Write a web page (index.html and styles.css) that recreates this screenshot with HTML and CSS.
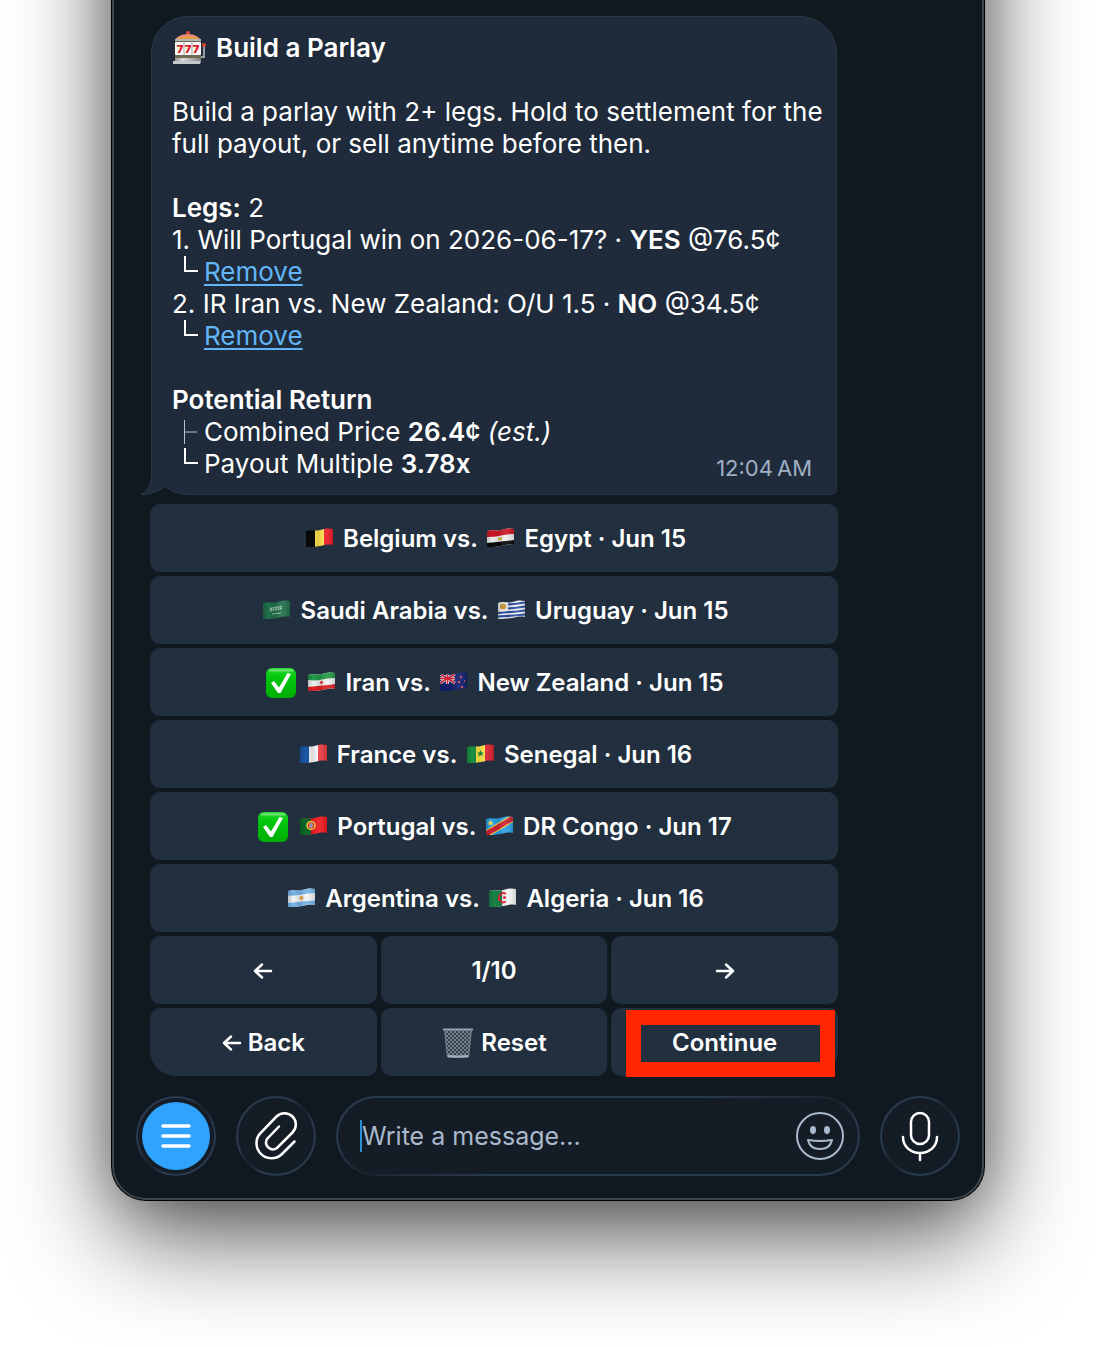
FILE: index.html
```html
<!DOCTYPE html>
<html lang="en">
<head>
    <meta charset="UTF-8">
    <meta name="viewport" content="width=device-width, initial-scale=1.0">
    <title>Build a Parlay</title>
    <link rel="stylesheet" href="styles.css">
</head>
<body>
    <!-- Shared shapes for the flags and icons -->
    <svg class="defs" width="0" height="0" aria-hidden="true">
        <defs>
            <clipPath id="wave">
                <path d="M0 3C5 1 9 3.500 14 2S22 0 27 1V17C22 16 19 17 14 18S5 19 0 19Z"/>
            </clipPath>
            <linearGradient id="fold">
                <stop offset="0" stop-color="#000" stop-opacity=".2"/>
                <stop offset=".2" stop-color="#000" stop-opacity="0"/>
                <stop offset=".45" stop-color="#000" stop-opacity=".12"/>
                <stop offset=".7" stop-color="#fff" stop-opacity=".08"/>
                <stop offset="1" stop-color="#000" stop-opacity=".15"/>
            </linearGradient>
            <linearGradient id="green" x2="0" y2="1">
                <stop offset="0" stop-color="#2bdc35"/>
                <stop offset=".3" stop-color="#00c70c"/>
                <stop offset="1" stop-color="#00ad05"/>
            </linearGradient>
            <linearGradient id="metal">
                <stop offset="0" stop-color="#8b8f92"/>
                <stop offset=".3" stop-color="#d9dcdf"/>
                <stop offset="1" stop-color="#7d8285"/>
            </linearGradient>
            <pattern id="mesh" width="4" height="4" patternUnits="userSpaceOnUse">
                <path d="M0 0L4 4M4 0L0 4" stroke="#71808d" stroke-width="1"/>
            </pattern>
            <symbol id="check" viewBox="0 0 30 30">
                <rect width="30" height="30" rx="6" fill="url(#green)"/>
                <path d="M4 2.500H26" stroke="#8df08f" stroke-width="2" stroke-linecap="round" opacity=".7"/>
                <path d="M5 15L8 13L13 19.500L21.500 5L25 6L14.500 25H12Z" fill="#fff"/>
            </symbol>
            <symbol id="arrow-left" viewBox="0 0 20 20">
                <path d="M18 10H2M9 3.500L2 10L9 16.500" fill="none" stroke="#fff" stroke-width="2.500" stroke-linecap="round" stroke-linejoin="round"/>
            </symbol>
            <symbol id="arrow-right" viewBox="0 0 20 20">
                <path d="M2 10H18M11 3.500L18 10L11 16.500" fill="none" stroke="#fff" stroke-width="2.500" stroke-linecap="round" stroke-linejoin="round"/>
            </symbol>
            <symbol id="corner" viewBox="0 0 32 32">
                <path d="M13 0V15H26" fill="none" stroke="#fff" stroke-width="2"/>
            </symbol>
            <symbol id="tee" viewBox="0 0 32 32">
                <path d="M12.500 4V28M12.500 16H25" fill="none" stroke="#b9bfc6" stroke-width="1"/>
            </symbol>
        </defs>
    </svg>

    <main class="window">
        <section class="chat">
            <article class="bubble">
                <h1 class="line title">
                    <svg class="slot" viewBox="0 0 34 34" aria-hidden="true">
                        <circle cx="16" cy="2" r="2" fill="#e0483a"/>
                        <path d="M3 9C4 6 10 3 16 3S27 6 29 9Z" fill="#e78e7c"/>
                        <path d="M6 7C11 5 21 5 26 7L28 9H4Z" fill="#ed9a3a"/>
                        <path d="M29 26H32V15" fill="none" stroke="#9a9fa3" stroke-width="2"/>
                        <circle cx="32" cy="14" r="2" fill="#e2402f"/>
                        <rect x="3" y="8" width="26" height="21" rx="2" fill="#6f6b52"/>
                        <rect x="3" y="8" width="26" height="2" fill="#b3b6b7"/>
                        <rect x="3" y="11" width="26" height="13" rx="1" fill="#f7f7f7"/>
                        <path d="M12 11V24M20 11V24" stroke="#a9a9a9" stroke-width="1"/>
                        <text class="sevens" x="8" y="22">7</text>
                        <text class="sevens" x="16" y="22">7</text>
                        <text class="sevens" x="24" y="22">7</text>
                        <path d="M3 27H29V30H3Z" fill="url(#metal)"/>
                        <path d="M1 30H29L28 33H1Z" fill="#c5c8ca"/>
                    </svg>
                    Build a Parlay
                </h1>
                <p class="text">Build a parlay with 2+ legs. Hold to settlement for the full payout, or sell anytime before then.</p>
                <div class="block">
                    <p class="line"><b>Legs:</b> 2</p>
                    <p class="line">1. Will Portugal win on 2026-06-17? · <b>YES</b> @76.5¢</p>
                    <p class="line"><svg class="tree" aria-hidden="true"><use href="#corner"/></svg><a href="#">Remove</a></p>
                    <p class="line">2. IR Iran vs. New Zealand: O/U 1.5 · <b>NO</b> @34.5¢</p>
                    <p class="line"><svg class="tree" aria-hidden="true"><use href="#corner"/></svg><a href="#">Remove</a></p>
                </div>
                <div class="block">
                    <h2 class="line">Potential Return</h2>
                    <p class="line"><svg class="tree" aria-hidden="true"><use href="#tee"/></svg>Combined Price <b>26.4¢</b> <i>(est.)</i></p>
                    <div class="last">
                        <p class="line"><svg class="tree" aria-hidden="true"><use href="#corner"/></svg>Payout Multiple <b>3.78x</b></p>
                        <time>12:04&#8239;AM</time>
                    </div>
                </div>
                <svg class="tail" viewBox="0 0 40 40" aria-hidden="true">
                    <path d="M11 2V22Q11 34 1 39.500Q16 39 25 31.500L34 30V2Z" fill="#1f2b3a"/>
                    <path d="M11.500 2V22Q11 34 1 39.500Q16 39 25 31.500" fill="none" stroke="#2a394a" stroke-width="1"/>
                </svg>
            </article>

            <div class="keyboard">
                <button class="key wide">
                    <svg class="flag" viewBox="0 0 27 19" aria-hidden="true"><g clip-path="url(#wave)">
                        <path d="M0 0H9V19H0Z" fill="#0a0a0a"/><path d="M9 0H18V19H9Z" fill="#ffe34a"/><path d="M18 0H27V19H18Z" fill="#ee1c28"/>
                        <path d="M0 0H27V19H0Z" fill="url(#fold)"/></g></svg>
                    Belgium vs.
                    <svg class="flag" viewBox="0 0 27 19" aria-hidden="true"><g clip-path="url(#wave)">
                        <path d="M0 0H27V19H0Z" fill="#eee"/><path d="M0 0H27V6Q20 6 14 7.500T0 9Z" fill="#ce1826"/><path d="M0 15Q8 14 14 13.500T27 12V19H0Z" fill="#0a0a0a"/>
                        <path d="M11 9L13 10L15 9V12H11Z" fill="#d8b42c"/>
                        <path d="M0 0H27V19H0Z" fill="url(#fold)"/></g></svg>
                    Egypt · Jun 15
                </button>
                <button class="key wide">
                    <svg class="flag" viewBox="0 0 27 19" aria-hidden="true"><g clip-path="url(#wave)">
                        <path d="M0 0H27V19H0Z" fill="#20704a"/>
                        <path d="M7 8.500L19 6.500M7 10.500L19 8.500" stroke="#9fc5b0" stroke-width="1.500" stroke-dasharray="2 .5"/><path d="M9 14L18 13" stroke="#9fc5b0" stroke-width="1"/>
                        <path d="M0 0H27V19H0Z" fill="url(#fold)"/></g></svg>
                    Saudi Arabia vs.
                    <svg class="flag" viewBox="0 0 27 19" aria-hidden="true"><g clip-path="url(#wave)">
                        <path d="M0 0H27V19H0Z" fill="#f4f4f4"/>
                        <path d="M10 4.500Q18 4 27 2.500M10 8.500Q18 8 27 6.500M0 13Q14 12 27 10.500M0 16.500Q14 16 27 14.500" fill="none" stroke="#2b4fa5" stroke-width="2"/>
                        <path d="M0 0H10V11H0Z" fill="#eee"/><circle cx="5" cy="6.500" r="3" fill="#c99a3d"/>
                        <path d="M0 0H27V19H0Z" fill="url(#fold)"/></g></svg>
                    Uruguay · Jun 15
                </button>
                <button class="key wide">
                    <svg class="check" aria-label="Selected"><use href="#check"/></svg>
                    <svg class="flag" viewBox="0 0 27 19" aria-hidden="true"><g clip-path="url(#wave)">
                        <path d="M0 0H27V19H0Z" fill="#f1f1f1"/><path d="M0 0H27V6Q20 6 14 7.500T0 8Z" fill="#249b4a"/><path d="M0 15Q8 14 14 13.500T27 12V19H0Z" fill="#df2027"/>
                        <path d="M13.500 8.500L15.500 10.500L13.500 12.500L11.500 10.500Z" fill="#e13b3b"/>
                        <path d="M0 0H27V19H0Z" fill="url(#fold)"/></g></svg>
                    Iran vs.
                    <svg class="flag" viewBox="0 0 27 19" aria-hidden="true"><g clip-path="url(#wave)">
                        <path d="M0 0H27V19H0Z" fill="#10206f"/>
                        <path d="M0 2L15 11M0 11L15 2M7.500 0V12M0 6.500H15" stroke="#e8e8f0" stroke-width="3"/><path d="M0 2L15 11M0 11L15 2M7.500 0V12M0 6.500H15" stroke="#dc2334" stroke-width="1.500"/>
                        <path d="M20 4h2v2h-2zM18 9h2v2h-2zM24 8h1v2h-1zM21 14h2v2h-2z" fill="#d64a63"/>
                        <path d="M0 0H27V19H0Z" fill="url(#fold)"/></g></svg>
                    New Zealand · Jun 15
                </button>
                <button class="key wide">
                    <svg class="flag" viewBox="0 0 27 19" aria-hidden="true"><g clip-path="url(#wave)">
                        <path d="M0 0H9V19H0Z" fill="#1b58a7"/><path d="M9 0H18V19H9Z" fill="#f7f7f9"/><path d="M18 0H27V19H18Z" fill="#eb3b40"/>
                        <path d="M0 0H27V19H0Z" fill="url(#fold)"/></g></svg>
                    France vs.
                    <svg class="flag" viewBox="0 0 27 19" aria-hidden="true"><g clip-path="url(#wave)">
                        <path d="M0 0H9V19H0Z" fill="#199143"/><path d="M9 0H18V19H9Z" fill="#ffe843"/><path d="M18 0H27V19H18Z" fill="#dc2230"/>
                        <path d="M13.500 6L14.500 8.500H17L15 10L16 12.500L13.500 11L11 12.500L12 10L10 8.500H12.500Z" fill="#168c40"/>
                        <path d="M0 0H27V19H0Z" fill="url(#fold)"/></g></svg>
                    Senegal · Jun 16
                </button>
                <button class="key wide">
                    <svg class="check" aria-label="Selected"><use href="#check"/></svg>
                    <svg class="flag" viewBox="0 0 27 19" aria-hidden="true"><g clip-path="url(#wave)">
                        <path d="M0 0H27V19H0Z" fill="#f2181f"/><path d="M0 0H11V19H0Z" fill="#0b6a28"/>
                        <circle cx="11" cy="9.500" r="4" fill="#d93a2c" stroke="#f3d64b" stroke-width="1.500"/><path d="M9.500 7.500H12.500V11L11 12L9.500 11Z" fill="#e9e9f2"/><path d="M11 8V11" stroke="#3b5ca8" stroke-width="1"/>
                        <path d="M0 0H27V19H0Z" fill="url(#fold)"/></g></svg>
                    Portugal vs.
                    <svg class="flag" viewBox="0 0 27 19" aria-hidden="true"><g clip-path="url(#wave)">
                        <path d="M0 0H27V19H0Z" fill="#2ba3e8"/>
                        <path d="M0 18Q12 11 27 2" fill="none" stroke="#f7d84a" stroke-width="7"/><path d="M0 18Q12 11 27 2" fill="none" stroke="#cf2434" stroke-width="5"/>
                        <path d="M4.500 4L5.500 6H7.500L6 7.500L6.500 9.500L4.500 8.500L2.500 9.500L3 7.500L1.500 6H3.500Z" fill="#f8dc4b"/>
                        <path d="M0 0H27V19H0Z" fill="url(#fold)"/></g></svg>
                    DR Congo · Jun 17
                </button>
                <button class="key wide">
                    <svg class="flag" viewBox="0 0 27 19" aria-hidden="true"><g clip-path="url(#wave)">
                        <path d="M0 0H27V19H0Z" fill="#f2f3f5"/><path d="M0 0H27V5Q20 5 14 6.500T0 7.500Z" fill="#77b5e8"/><path d="M0 15Q8 14 14 13.500T27 12.500V19H0Z" fill="#77b5e8"/>
                        <circle cx="13.500" cy="10" r="2" fill="#e5a544"/>
                        <path d="M0 0H27V19H0Z" fill="url(#fold)"/></g></svg>
                    Argentina vs.
                    <svg class="flag" viewBox="0 0 27 19" aria-hidden="true"><g clip-path="url(#wave)">
                        <path d="M0 0H27V19H0Z" fill="#f3f3f3"/><path d="M0 0H13V19H0Z" fill="#198447"/>
                        <path d="M17 6A4.500 4.500 0 1 0 17 13.500" fill="none" stroke="#e52938" stroke-width="2"/><circle cx="15.500" cy="9.500" r="1.500" fill="#e52938"/>
                        <path d="M0 0H27V19H0Z" fill="url(#fold)"/></g></svg>
                    Algeria · Jun 16
                </button>

                <button class="key" aria-label="Previous page"><svg class="arrow" aria-hidden="true"><use href="#arrow-left"/></svg></button>
                <button class="key">1/10</button>
                <button class="key" aria-label="Next page"><svg class="arrow" aria-hidden="true"><use href="#arrow-right"/></svg></button>

                <button class="key back"><svg class="arrow" aria-hidden="true"><use href="#arrow-left"/></svg> Back</button>
                <button class="key">
                    <svg class="check" viewBox="0 0 30 30" aria-hidden="true">
                        <path d="M1 2H29L26 29Q15 31 4 29Z" fill="#36424d"/>
                        <path d="M1 2H29L26 29Q15 31 4 29Z" fill="url(#mesh)"/>
                        <path d="M2 3L4.500 29Q15 30 25.500 29L28 3" fill="none" stroke="#75828e" stroke-width="1"/>
                        <path d="M0 1.500H30" stroke="#93a2ae" stroke-width="2"/>
                        <path d="M5 28Q15 29 25 28" fill="none" stroke="#a5b0b9" stroke-width="2"/>
                    </svg>
                    Reset
                </button>
                <button class="key continue">Continue</button>
            </div>
        </section>

        <form class="composer">
            <button type="button" class="round menu" aria-label="Menu">
                <svg viewBox="0 0 80 80">
                    <circle cx="40" cy="40" r="34" fill="#30a3ff"/>
                    <path d="M27 30H53M27 40H53M27 50H53" stroke="#fff" stroke-width="3.500" stroke-linecap="round"/>
                </svg>
            </button>
            <button type="button" class="round" aria-label="Attach file">
                <svg viewBox="0 0 80 80">
                    <path d="M43 30.500L31 43A6.900 6.900 0 0 0 41 52L56.500 36.500A11.300 11.300 0 0 0 40.500 20.500L25 36.500A15 15 0 0 0 46 58L58.500 45.500" fill="none" stroke="#fff" stroke-width="2.500" stroke-linecap="round"/>
                </svg>
            </button>
            <div class="field">
                <span class="caret"></span>
                <input type="text" placeholder="Write a message..." aria-label="Write a message">
                <button type="button" class="emoji" aria-label="Emoji">
                    <svg viewBox="0 0 48 48">
                        <circle cx="24" cy="24" r="23" fill="none" stroke="#a9b9ce" stroke-width="2"/>
                        <ellipse cx="17" cy="18" rx="3" ry="4" fill="#a9b9ce"/>
                        <ellipse cx="31" cy="18" rx="3" ry="4" fill="#a9b9ce"/>
                        <path d="M12 28Q24 30 36 28Q34 37 24 37T12 28Z" fill="none" stroke="#a9b9ce" stroke-width="2" stroke-linejoin="round"/>
                    </svg>
                </button>
            </div>
            <button type="button" class="round" aria-label="Record voice message">
                <svg viewBox="0 0 80 80" fill="none" stroke="#fff" stroke-width="2.500" stroke-linecap="round">
                    <rect x="31" y="17" width="18" height="31" rx="9"/>
                    <path d="M23 41C23 50 30 57 40 57S57 50 57 41M40 57V64"/>
                </svg>
            </button>
        </form>
    </main>
</body>
</html>
```
FILE: styles.css
```css
* {
    box-sizing: border-box;
}

body {
    margin: 0;
    font-family: Inter, 'Liberation Sans', sans-serif;
    color: #fff;
    background: #fff;
    overflow: hidden;
}

.defs {
    position: absolute;
}

/* the window runs past the top edge, so its shadow does too */
.window {
    margin: -160px 112px 148px;
    padding: 174px 22px 22px;
    border: 2px solid #3d464e;
    border-radius: 34px;
    background: #10191f;
    box-shadow: 0 0 0 1px #000, 0 0 50px rgba(0, 0, 0, 0.25), 0 36px 100px rgba(0, 0, 0, 0.65);
}

.chat {
    max-width: 702px;
    padding-left: 14px;
}

.bubble {
    position: relative;
    margin: 0 1px 9px;
    padding: 15px 12px 10px 20px;
    border: 1px solid #2a394a;
    border-radius: 37px 37px 6px 37px;
    background: #1f2b3a;
    font-size: 26px;
    line-height: 32px;
}

.line,
.text {
    margin: 0;
    font-size: 26px;
    font-weight: 400;
}

.text,
.block {
    margin-top: 32px;
}

.bubble b,
h1.line,
h2.line {
    font-weight: 600;
}

.title {
    display: flex;
    align-items: center;
    gap: 10px;
}

.slot {
    width: 34px;
    height: 34px;
    margin: -2px 0;
}

.sevens {
    font-size: 11px;
    font-weight: 900;
    fill: #e01b22;
    text-anchor: middle;
}

.tree {
    width: 32px;
    height: 32px;
    vertical-align: top;
}

.bubble a {
    color: #62b5f7;
    text-decoration-thickness: 2px;
    text-underline-offset: 3px;
    text-decoration-skip-ink: none;
}

.last {
    display: flex;
    justify-content: space-between;
}

.last time {
    padding: 4px 12px 0 0;
    font-size: 22px;
    color: #9fb0c5;
}

.last .line {
    height: 32px;
}

.tail {
    position: absolute;
    left: -12px;
    bottom: -1px;
    width: 40px;
    height: 40px;
}

.keyboard {
    display: grid;
    grid-template-columns: repeat(3, 1fr);
    gap: 4px;
}

.key {
    position: relative;
    height: 68px;
    padding: 2px 0 0;
    border: none;
    border-radius: 10px;
    background: #212f3f;
    color: #fff;
    font: 600 24px/32px Inter, 'Liberation Sans', sans-serif;
    cursor: pointer;
}

.key:hover {
    background: #283849;
}

.wide {
    grid-column: span 3;
}

.back {
    border-bottom-left-radius: 26px;
}

.flag {
    width: 27px;
    height: 19px;
    margin: 0 4px;
}

.check {
    width: 30px;
    height: 30px;
    margin: 0 2px;
    vertical-align: -7px;
}

.arrow {
    width: 20px;
    height: 20px;
    vertical-align: -2px;
}

.continue {
    border-bottom-right-radius: 26px;
}

.continue::after {
    content: "";
    position: absolute;
    top: 2px;
    right: 3px;
    bottom: -1px;
    left: 15px;
    border: 15px solid #ff2600;
}

.composer {
    display: flex;
    gap: 20px;
    margin-top: 20px;
}

.round,
.field {
    height: 80px;
    border: 2px solid transparent;
    border-radius: 40px;
    background:
        linear-gradient(#141c25, #141c25) padding-box,
        linear-gradient(to bottom right, #2a3b4f 35%, #18222c 50%, #2a3b4f 65%) border-box;
}

.round {
    flex: none;
    width: 80px;
    padding: 0;
    cursor: pointer;
}

.round svg {
    display: block;
    width: 80px;
    height: 80px;
    margin: -2px;
}

.field {
    flex: 1;
    min-width: 0;
    display: flex;
    align-items: center;
    padding: 0 14px 0 22px;
}

.caret {
    width: 2px;
    height: 32px;
    background: #2b8fd6;
}

.field input {
    flex: 1;
    min-width: 0;
    height: 40px;
    padding: 0;
    border: none;
    outline: none;
    background: none;
    color: #fff;
    font: 25px/32px Inter, 'Liberation Sans', sans-serif;
}

.field input::placeholder {
    color: #a9b9ce;
    opacity: 1;
}

.emoji {
    width: 48px;
    height: 48px;
    padding: 0;
    border: none;
    background: none;
    cursor: pointer;
}

.emoji svg {
    display: block;
}
```
